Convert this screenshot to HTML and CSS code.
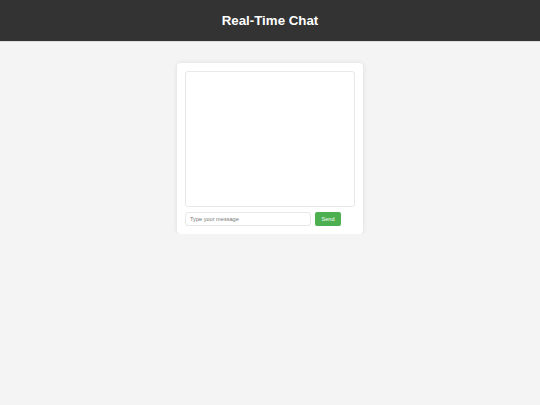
FILE: index.html
```html
<!DOCTYPE html>
<html lang="en">
<head>
  <meta charset="UTF-8" />
  <title>Real-Time Chat</title>
  <link rel="stylesheet" href="styles.css">
</head>
<body>
  <header class="top-bar">
    <h1>Real-Time Chat</h1>
  </header>

  <div class="chat-container">
    <div class="chat-box" id="chat-box"></div>
    <div class="chat-form">
      <input type="text" id="message" placeholder="Type your message" />
      <button id="send">Send</button>
    </div>
  </div>
</body>
</html>
```

FILE: styles.css
```css
* {
  box-sizing: border-box;
}

body {
  margin: 0;
  background-color: #f4f4f4;
  font-family: "Liberation Sans", Arial, sans-serif;
}

.top-bar {
  background-color: #333;
  color: #fff;
  height: 42px;
  display: flex;
  justify-content: center;
  align-items: center;
  border-bottom: 1px solid #ddd;
}

.top-bar h1 {
  margin: 0;
  font-size: 13.3px;
  font-weight: bold;
}

.chat-container {
  width: 186px;
  margin: 21px auto 0;
  background-color: #fff;
  padding: 8px;
  border-radius: 4px;
  box-shadow: 0 0 5px rgba(0, 0, 0, 0.1);
}

.chat-box {
  width: 170px;
  height: 136px;
  border: 1px solid #e8e8e8;
  border-radius: 3px;
  overflow-y: auto;
}

.chat-form {
  display: flex;
  gap: 4px;
  margin-top: 5px;
}

.chat-form input {
  width: 126px;
  height: 14px;
  padding: 0 4px;
  border: 1px solid #e8e8e8;
  border-radius: 3px;
  font-family: inherit;
  font-size: 5.6px;
  outline: none;
}

.chat-form input::placeholder {
  color: #777;
}

.chat-form button {
  width: 26px;
  height: 14px;
  padding: 0;
  border: none;
  border-radius: 2px;
  background-color: #4caf50;
  color: #fff;
  font-family: inherit;
  font-size: 5.6px;
  cursor: pointer;
}
```
